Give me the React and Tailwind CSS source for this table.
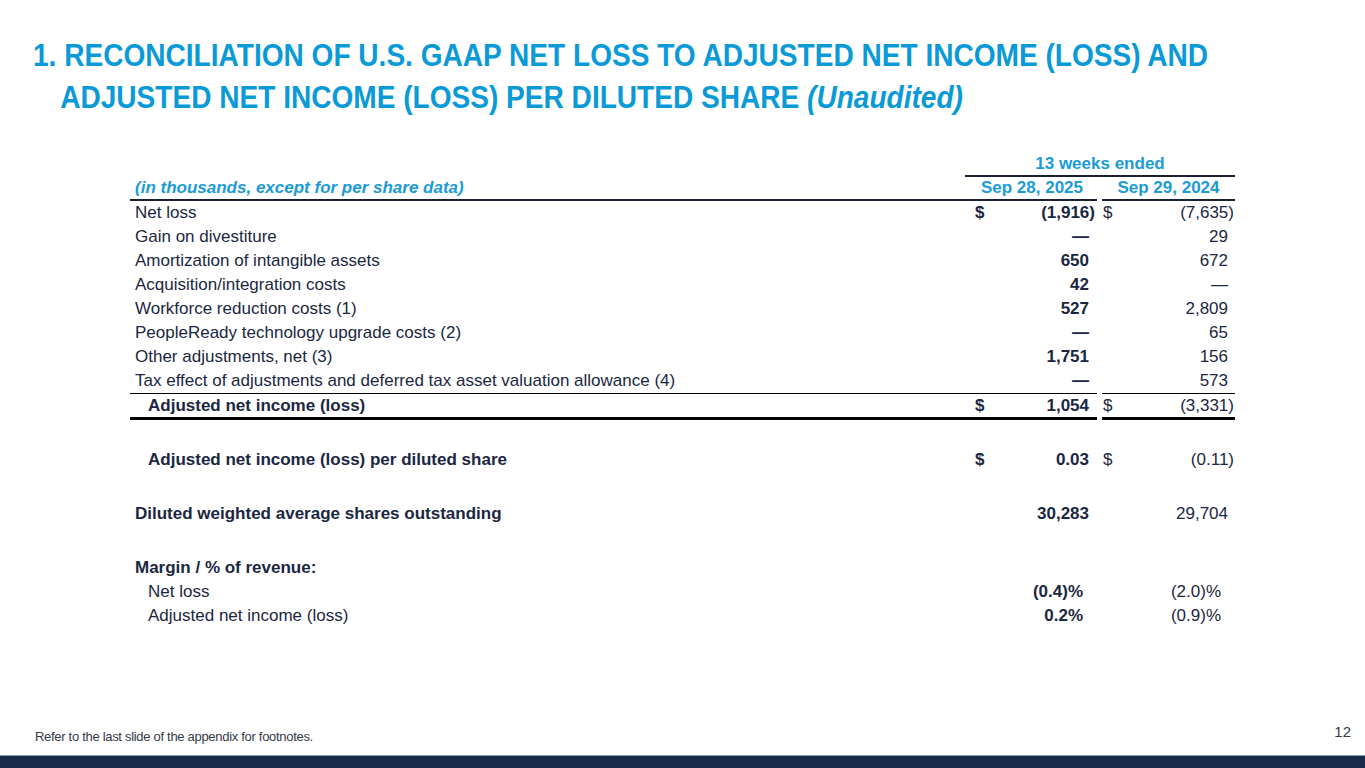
import React from "react";

const rows = [
  { label: "Net loss", a: "(1,916)", b: "(7,635)", dollar: true },
  { label: "Gain on divestiture", a: "—", b: "29" },
  { label: "Amortization of intangible assets", a: "650", b: "672" },
  { label: "Acquisition/integration costs", a: "42", b: "—" },
  { label: "Workforce reduction costs (1)", a: "527", b: "2,809" },
  { label: "PeopleReady technology upgrade costs (2)", a: "—", b: "65" },
  { label: "Other adjustments, net (3)", a: "1,751", b: "156" },
  { label: "Tax effect of adjustments and deferred tax asset valuation allowance (4)", a: "—", b: "573" },
];

function Val({ v, bold }) {
  const paren = v.endsWith(")");
  return (
    <span className={(bold ? "font-bold " : "") + (paren ? "pr-0" : "pr-[6px]")}>{v}</span>
  );
}

function Row({ label, a, b, dollar, labelClass = "pl-[5px]", boldLabel = false }) {
  return (
    <div className="flex h-[24px] items-center">
      <div className={"w-[836px] " + labelClass + (boldLabel ? " font-bold" : "")}>{label}</div>
      <div className="w-[131px] flex justify-between pl-[9px] pr-[2px] font-bold">
        <span>{dollar ? "$" : ""}</span>
        <Val v={a} bold />
      </div>
      <div className="w-[5px]" />
      <div className="w-[133px] flex justify-between pl-[1px] pr-[1px]">
        <span>{dollar ? "$" : ""}</span>
        <Val v={b} />
      </div>
    </div>
  );
}

export default function App() {
  return (
    <div className="w-[1365px] h-[768px] bg-white overflow-hidden flex flex-col" style={{ fontFamily: '"Liberation Sans", Arial, sans-serif' }}>
      <div className="pt-[34px] pl-[33px] text-[#0a9ad7] font-bold text-[32px] leading-[42px]">
        <div className="origin-left scale-x-[0.877] whitespace-nowrap">
          <div>1. RECONCILIATION OF U.S. GAAP NET LOSS TO ADJUSTED NET INCOME (LOSS) AND</div>
          <div className="pl-[31px]">ADJUSTED NET INCOME (LOSS) PER DILUTED SHARE <i>(Unaudited)</i></div>
        </div>
      </div>

      <div className="pl-[130px] mt-[35px] text-[17px] text-[#1b2741]">
        <div className="flex h-[24px]">
          <div className="w-[835px]" />
          <div className="w-[270px] text-center font-bold text-[#1a9bd6] border-b-2 border-[#1b2030] leading-[22px]">13 weeks ended</div>
        </div>
        <div className="flex h-[24px]">
          <div className="w-[967px] flex border-b-2 border-[#1b2030] leading-[22px]">
            <div className="flex-1 pl-[5px] font-bold italic text-[#1a9bd6]">(in thousands, except for per share data)</div>
            <div className="w-[131px] text-right pr-[14px] font-bold text-[#1a9bd6]">Sep 28, 2025</div>
          </div>
          <div className="w-[5px]" />
          <div className="w-[133px] text-center font-bold text-[#1a9bd6] border-b-2 border-[#1b2030] leading-[22px]">Sep 29, 2024</div>
        </div>
        {rows.map((r) => (
          <Row key={r.label} {...r} />
        ))}
        <div className="flex">
          <div className="w-[967px] border-t border-b-[3px] border-[#000]">
            <div className="flex h-[23px] items-center">
              <div className="flex-1 pl-[18px] font-bold">Adjusted net income (loss)</div>
              <div className="w-[131px] flex justify-between pl-[9px] pr-[2px] font-bold">
                <span>$</span>
                <Val v="1,054" bold />
              </div>
            </div>
          </div>
          <div className="w-[5px]" />
          <div className="w-[133px] border-t border-b-[3px] border-[#000]">
            <div className="flex h-[23px] items-center justify-between pl-[1px] pr-[1px]">
              <span>$</span>
              <Val v="(3,331)" />
            </div>
          </div>
        </div>
        <div className="h-[28px]" />
        <Row label="Adjusted net income (loss) per diluted share" a="0.03" b="(0.11)" dollar labelClass="pl-[18px]" boldLabel />
        <div className="h-[30px]" />
        <Row label="Diluted weighted average shares outstanding" a="30,283" b="29,704" boldLabel />
        <div className="h-[30px]" />
        <div className="flex h-[24px] items-center pl-[5px] font-bold">Margin / % of revenue:</div>
        <div className="flex h-[24px] items-center">
          <div className="w-[836px] pl-[18px]">Net loss</div>
          <div className="w-[131px] text-right pr-[14px] font-bold">(0.4)%</div>
          <div className="w-[5px]" />
          <div className="w-[133px] text-right pr-[14px]">(2.0)%</div>
        </div>
        <div className="flex h-[24px] items-center">
          <div className="w-[836px] pl-[18px]">Adjusted net income (loss)</div>
          <div className="w-[131px] text-right pr-[14px] font-bold">0.2%</div>
          <div className="w-[5px]" />
          <div className="w-[133px] text-right pr-[14px]">(0.9)%</div>
        </div>
      </div>

      <div className="flex-1" />
      <div className="flex items-end justify-between pl-[35px] pr-[14px] pb-[11px] text-[#333a48]">
        <div className="text-[13px] leading-[15px] tracking-[-0.3px]">Refer to the last slide of the appendix for footnotes.</div>
        <div className="text-[15px] leading-[18px] mb-[3px]">12</div>
      </div>
      <div className="h-[13px] bg-[#172a49] border-t border-[#8ea0b5]" />
    </div>
  );
}
